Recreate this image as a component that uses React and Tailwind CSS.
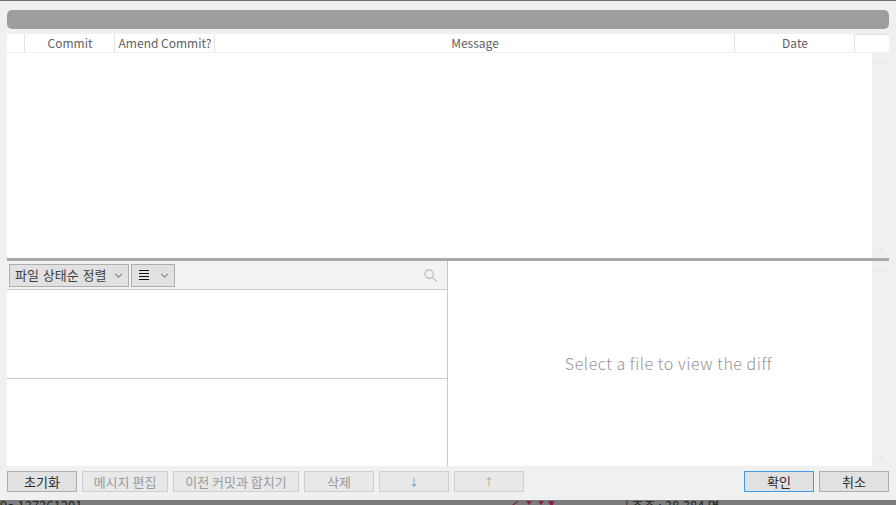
const font = { fontFamily: '"Noto Sans CJK KR", "Noto Sans", sans-serif' };

const columns = [
  { label: "", width: "w-[18px]" },
  { label: "Commit", width: "w-[90px]" },
  { label: "Amend Commit?", width: "w-[100px]" },
  { label: "Message", width: "w-[520px]" },
  { label: "Date", width: "w-[120px]" },
];

const Chevron = ({ className, up }) => (
  <svg viewBox="0 0 10 6" className={className} fill="none" stroke="currentColor" strokeWidth="1">
    <path d={up ? "M1 5l4-4 4 4" : "M1 1l4 4 4-4"} />
  </svg>
);

const Scrollbar = () => (
  <div className="w-[17px] flex flex-col justify-between items-center pt-[7px] pb-[6px] text-[#d9d9d9]">
    <Chevron up className="w-[9px] h-[5px] mt-px" />
    <Chevron className="w-[9px] h-[5px] mb-px" />
  </div>
);

const Btn = ({ children, w, disabled, primary, className = "" }) => (
  <div
    className={`h-[21px] flex items-center justify-center border text-[13px] leading-none ${w} ${className} ${
      disabled
        ? "border-[#cfcfcf] bg-[#e8e8e8] text-[#9a9a9a]"
        : primary
        ? "border-[#3f9be8] bg-[#e1e1e1] text-[#2b2b2b]"
        : "border-[#adadad] bg-[#e1e1e1] text-[#2b2b2b]"
    }`}
  >
    {children}
  </div>
);

export default function App() {
  return (
    <div className="w-[896px] h-[505px] overflow-hidden flex flex-col bg-[#f0f0f0]" style={font}>
      <div className="h-px bg-[#6e6e6e]" />
      <div className="flex-1 min-h-0 flex flex-col px-[7px] pt-[9px]">
        <div className="h-[19px] rounded-[5px] bg-[#9e9e9e]" />

        <div className="mt-[5px] h-[18px] bg-white flex text-[12px] text-[#5f5f5f]">
          {columns.map((c) => (
            <div key={c.label} className={`${c.width} h-full flex items-center justify-center pl-px border-r border-[#e3e3e3] whitespace-nowrap`}>
              {c.label}
            </div>
          ))}
          <div className="flex-1 border-t border-[#e3e3e3]" />
        </div>

        <div className="h-[206px] flex border-t border-[#f0f0f0]">
          <div className="flex-1 bg-white" />
          <Scrollbar />
        </div>

        <div className="h-[3px] bg-[#a9a9a9]" />

        <div className="h-[205px] flex">
          <div className="w-[441px] flex flex-col bg-white border-r border-[#c8c8c8]">
            <div className="h-[29px] flex items-center gap-[2px] pl-[2px] pr-[10px] bg-[#f3f3f3] border-b border-[#cccccc]">
              <div className="w-[120px] h-[23px] flex items-center justify-between pl-[5px] pr-[5px] border border-[#adadad] bg-[#e1e1e1] text-[13px] [word-spacing:1px] text-[#3c3c3c] whitespace-nowrap">
                파일 상태순 정렬
                <Chevron className="w-[9px] h-[5px] text-[#333333]" />
              </div>
              <div className="w-[44px] h-[23px] flex items-center justify-between pl-[7px] pr-[5px] border border-[#adadad] bg-[#e1e1e1]">
                <svg viewBox="0 0 10 10" className="w-[10px] h-[10px]" stroke="#111111" strokeWidth="1">
                  <path d="M0 .5h10M0 3.5h10M0 6.5h10M0 9.5h10" />
                </svg>
                <Chevron className="w-[9px] h-[5px] text-[#333333]" />
              </div>
              <svg viewBox="0 0 14 14" className="ml-auto w-[13px] h-[13px]" fill="none" stroke="#b9b9b9" strokeWidth="1.3">
                <circle cx="5.5" cy="5.5" r="4.5" />
                <path d="M9 9l4.5 4.5" />
              </svg>
            </div>
            <div className="h-[89px] border-b border-[#c8c8c8]" />
            <div className="flex-1" />
          </div>
          <div className="flex-1 bg-white flex items-center justify-center pl-[17px] pb-px text-[16px] font-light tracking-[0.55px] text-[#949494]">
            Select a file to view the diff
          </div>
          <Scrollbar />
        </div>

        <div className="mt-[5px] flex">
          <Btn w="w-[70px]">초기화</Btn>
          <Btn w="w-[86px]" disabled className="ml-[5px]">메시지 편집</Btn>
          <Btn w="w-[126px]" disabled className="ml-[5px]">이전 커밋과 합치기</Btn>
          <Btn w="w-[70px]" disabled className="ml-[5px]">삭제</Btn>
          <Btn w="w-[70px]" disabled className="ml-[5px]">
            <span className="text-[10px] text-[#7f98ad]">↓</span>
          </Btn>
          <Btn w="w-[70px]" disabled className="ml-[5px]">
            <span className="text-[10px] text-[#b39c84]">↑</span>
          </Btn>
          <Btn w="w-[70px]" primary className="ml-auto">확인</Btn>
          <Btn w="w-[70px]" className="ml-[5px]">취소</Btn>
        </div>
      </div>
      {/* window behind the dialog, only its top edge shows */}
      <div className="h-[5px] bg-[#7c7c7c] overflow-hidden flex text-[13px] leading-[16px] text-[#222222] whitespace-nowrap">
        <span className="w-[512px] -mt-[2px]">9a 137361201</span>
        <svg viewBox="0 0 44 5" className="w-[44px] h-[5px] shrink-0" fill="#8a1f4f">
          <path d="M0 5l5-4h2L2 5zM14 1h6l-3 4zM26 1h6l-3 4zM36 1h6l-1 4h-3z" />
        </svg>
        <span className="ml-[69px] -mt-[2px]">| 주주 : 38,384 명</span>
      </div>
    </div>
  );
}
